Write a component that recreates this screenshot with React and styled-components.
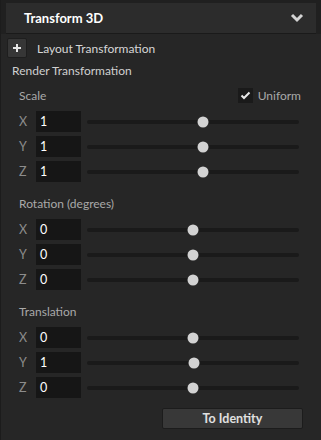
import styled, { createGlobalStyle } from 'styled-components';

const GlobalStyle = createGlobalStyle`
  body {
    margin: 0;
    background: #262626;
    font-family: Lato, 'Open Sans', sans-serif;
  }
`;

const sections = [
  {
    title: 'Scale',
    uniform: true,
    rows: [
      { axis: 'X', value: '1', pos: 0.547 },
      { axis: 'Y', value: '1', pos: 0.547 },
      { axis: 'Z', value: '1', pos: 0.547 },
    ],
  },
  {
    title: 'Rotation (degrees)',
    rows: [
      { axis: 'X', value: '0', pos: 0.5 },
      { axis: 'Y', value: '0', pos: 0.5 },
      { axis: 'Z', value: '0', pos: 0.5 },
    ],
  },
  {
    title: 'Translation',
    rows: [
      { axis: 'X', value: '0', pos: 0.5 },
      { axis: 'Y', value: '1', pos: 0.505 },
      { axis: 'Z', value: '0', pos: 0.5 },
    ],
  },
];

const App = () => {
  return (
    <Panel>
      <GlobalStyle />
      <TopBar>
        <Header>
          <Title>Transform 3D</Title>
          <svg width='14' height='10' viewBox='0 0 14 10'>
            <polyline
              points='2,2 7,7 12,2'
              fill='none'
              stroke='#d4d4d4'
              strokeWidth='3'
            />
          </svg>
        </Header>
      </TopBar>

      <Body>
        <AddRow>
          <PlusButton>
            <svg width='10' height='10' viewBox='0 0 10 10'>
              <path d='M5 1v8M1 5h8' stroke='#e6e6e6' strokeWidth='2' />
            </svg>
          </PlusButton>
          <RowText>Layout Transformation</RowText>
        </AddRow>

        <GroupTitle>Render Transformation</GroupTitle>

        {sections.map((section) => (
          <Section key={section.title}>
            <SectionHead>
              <SectionLabel>{section.title}</SectionLabel>
              {section.uniform && (
                <CheckWrap>
                  <CheckBox>
                    <svg width='11' height='9' viewBox='0 0 11 9'>
                      <polyline
                        points='1.5,4.5 4,7 9.5,1.5'
                        fill='none'
                        stroke='#e8e8e8'
                        strokeWidth='2'
                      />
                    </svg>
                  </CheckBox>
                  <SectionLabel>Uniform</SectionLabel>
                </CheckWrap>
              )}
            </SectionHead>
            <Rows>
              {section.rows.map((row) => (
                <AxisRow key={row.axis}>
                  <AxisLabel>{row.axis}</AxisLabel>
                  <ValueBox>{row.value}</ValueBox>
                  <Track>
                    <Thumb style={{ left: `${row.pos * 100}%` }} />
                  </Track>
                </AxisRow>
              ))}
            </Rows>
          </Section>
        ))}

        <Footer>
          <IdentityButton>To Identity</IdentityButton>
        </Footer>
      </Body>
    </Panel>
  );
};

const Panel = styled.div`
  min-height: 440px;
  background: #262626;
  border-left: 1px solid #1c1c1c;
  box-sizing: border-box;
`;

const TopBar = styled.div`
  background: #202020;
  padding: 3px 5px 0 5px;
`;

const Header = styled.div`
  height: 30px;
  background: #2c2c2c;
  border-bottom: 1px solid #1a1a1a;
  display: flex;
  align-items: center;
  justify-content: space-between;
  padding: 0 12px 0 18px;
`;

const Title = styled.span`
  color: #ffffff;
  font-size: 13px;
  font-weight: 700;
`;

const Body = styled.div`
  padding: 4px 18px 0 6px;
`;

const AddRow = styled.div`
  display: flex;
  align-items: center;
  gap: 10px;
  height: 20px;
`;

const PlusButton = styled.div`
  width: 20px;
  height: 20px;
  box-sizing: border-box;
  background: #363636;
  border: 1px solid #1e1e1e;
  border-radius: 2px;
  display: flex;
  align-items: center;
  justify-content: center;
`;

const RowText = styled.span`
  color: #d6d6d6;
  font-size: 12px;
`;

const GroupTitle = styled.div`
  margin-top: 3px;
  height: 20px;
  line-height: 20px;
  padding-left: 5px;
  color: #d0d0d0;
  font-size: 12px;
`;

const Section = styled.div`
  margin-top: 4px;
  padding-left: 12px;

  & + & {
    margin-top: 11px;
  }
`;

const SectionHead = styled.div`
  height: 20px;
  display: flex;
  align-items: center;
  justify-content: space-between;
`;

const SectionLabel = styled.span`
  color: #a9a9a9;
  font-size: 12px;
`;

const CheckWrap = styled.div`
  display: flex;
  align-items: center;
  gap: 5px;
  margin-right: 2px;
`;

const CheckBox = styled.div`
  width: 15px;
  height: 15px;
  background: #1a1a1a;
  display: flex;
  align-items: center;
  justify-content: center;
`;

const Rows = styled.div`
  margin-top: 6px;
  display: flex;
  flex-direction: column;
  gap: 4px;
`;

const AxisRow = styled.div`
  display: flex;
  align-items: center;
  height: 21px;
`;

const AxisLabel = styled.span`
  width: 17px;
  color: #8c8c8c;
  font-size: 12.5px;
`;

const ValueBox = styled.div`
  width: 45px;
  height: 21px;
  box-sizing: border-box;
  background: #161616;
  color: #ffffff;
  font-size: 12.5px;
  line-height: 21px;
  padding-left: 4px;
`;

const Track = styled.div`
  position: relative;
  flex: 1;
  height: 4px;
  margin: 0 4px 0 6px;
  background: #1a1a1a;
  border-radius: 2px;
`;

const Thumb = styled.div`
  position: absolute;
  top: 50%;
  width: 11px;
  height: 11px;
  border-radius: 50%;
  background: #d2d2d2;
  transform: translate(-50%, -50%);
`;

const Footer = styled.div`
  display: flex;
  justify-content: flex-end;
  margin-top: 10px;
`;

const IdentityButton = styled.button`
  width: 141px;
  height: 21px;
  background: #383838;
  border: 1px solid #1c1c1c;
  border-radius: 2px;
  color: #e0e0e0;
  font-family: inherit;
  font-size: 12.5px;
  font-weight: 700;
  padding: 0;
`;

export default App;
